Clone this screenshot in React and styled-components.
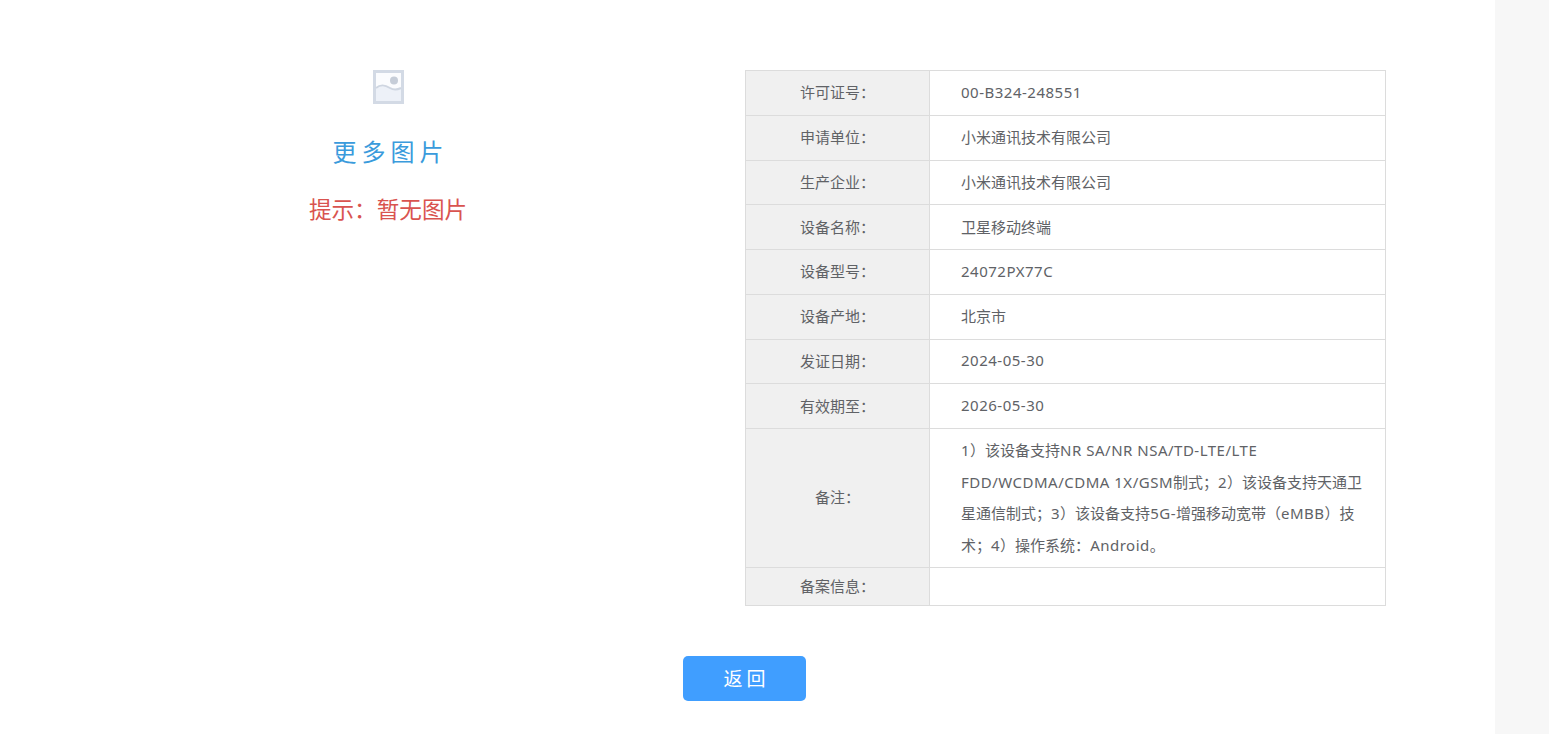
import React from "react";
import styled, { createGlobalStyle } from "styled-components";

const GlobalStyle = createGlobalStyle`
  html, body {
    margin: 0;
    padding: 0;
    background: #fff;
    font-family: "Noto Sans", "Noto Sans CJK SC", sans-serif;
  }
`;

const COLON = "\uFF1A";
const SEMI = "\uFF1B";
const L = "\uFF08";
const R = "\uFF09";

const rows = [
  ["许可证号" + COLON, "00-B324-248551"],
  ["申请单位" + COLON, "小米通讯技术有限公司"],
  ["生产企业" + COLON, "小米通讯技术有限公司"],
  ["设备名称" + COLON, "卫星移动终端"],
  ["设备型号" + COLON, "24072PX77C"],
  ["设备产地" + COLON, "北京市"],
  ["发证日期" + COLON, "2024-05-30"],
  ["有效期至" + COLON, "2026-05-30"],
];

const note =
  `1${R}该设备支持NR SA/NR NSA/TD-LTE/LTE FDD/WCDMA/CDMA 1X/GSM制式${SEMI}` +
  `2${R}该设备支持天通卫星通信制式${SEMI}3${R}该设备支持5G-增强移动宽带${L}eMBB${R}技术${SEMI}` +
  `4${R}操作系统${COLON}Android。`;

// latin runs are set a bit wider than the CJK around them
const withLatin = (text) =>
  text.split(/([A-Za-z0-9 /-]+)/).map((part, i) =>
    i % 2 ? <Latin key={i}>{part}</Latin> : part
  );

const PlaceholderIcon = () => (
  <svg width="31" height="34" viewBox="0 0 31 34">
    <rect x="0" y="0" width="31" height="34" fill="#d3dae5" />
    <rect x="3" y="3" width="25" height="28" fill="#fbfcfe" />
    <path d="M3 18 C8 14 12 15 17 18 C21 20.5 24 20 28 18 V31 H3 Z" fill="#edf1f8" />
    <path d="M3 18 C8 14 12 15 17 18 C21 20.5 24 20 28 18" fill="none" stroke="#cfd6e1" strokeWidth="2" />
    <circle cx="21" cy="10.5" r="4" fill="#c6cdd8" />
  </svg>
);

const App = () => (
  <Page>
    <GlobalStyle />
    <Main>
      <Content>
        <Gallery>
          <PlaceholderIcon />
          <MoreLink>更多图片</MoreLink>
          <Hint>{"提示" + COLON + "暂无图片"}</Hint>
        </Gallery>
        <InfoTable>
          <colgroup>
            <col width="184" />
            <col />
          </colgroup>
          <tbody>
            {rows.map(([label, value]) => (
              <Row key={label}>
                <Label>{label}</Label>
                <Value>{withLatin(value)}</Value>
              </Row>
            ))}
            <tr>
              <NoteLabel>{"备注" + COLON}</NoteLabel>
              <NoteValue>{withLatin(note)}</NoteValue>
            </tr>
            <ShortRow>
              <Label>{"备案信息" + COLON}</Label>
              <Value />
            </ShortRow>
          </tbody>
        </InfoTable>
      </Content>
      <Actions>
        <BackButton>返回</BackButton>
      </Actions>
    </Main>
    <Rail />
  </Page>
);

const Page = styled.div`
  display: flex;
  height: 734px;
  overflow: hidden;
`;

const Main = styled.div`
  flex: 1;
  padding-top: 70px;
`;

const Rail = styled.div`
  width: 54px;
  background: #f7f7f7;
`;

const Content = styled.div`
  display: flex;
  align-items: flex-start;
  padding-left: 31px;
`;

const Gallery = styled.div`
  width: 714px;
  display: flex;
  flex-direction: column;
  align-items: center;
`;

const MoreLink = styled.div`
  margin-top: 30px;
  font-size: 24px;
  line-height: 36px;
  letter-spacing: 5px;
  margin-right: -5px;
  color: #3a9bdc;
`;

const Hint = styled.div`
  margin-top: 22px;
  font-size: 22.6px;
  line-height: 36px;
  color: #d9534f;
`;

const InfoTable = styled.table`
  width: 641px;
  table-layout: fixed;
  border-collapse: collapse;
  font-size: 15px;
  color: #606266;
`;

const Row = styled.tr`
  height: 44.75px;
`;

const ShortRow = styled.tr`
  height: 38px;
`;

const Label = styled.td`
  border: 1px solid #dcdcdc;
  background: #f0f0f0;
  text-align: center;
  padding: 0 0 2px;
`;

const NoteLabel = styled(Label)`
  padding-bottom: 4px;
`;

const Value = styled.td`
  border: 1px solid #dcdcdc;
  padding: 0 18px 2px 31px;
`;

const NoteValue = styled(Value)`
  line-height: 31.5px;
  padding-top: 6px;
  padding-bottom: 6px;
`;

const Latin = styled.span`
  letter-spacing: 0.5px;
`;

const Actions = styled.div`
  display: flex;
  justify-content: flex-start;
  padding: 50px 0 0 683px;
`;

const BackButton = styled.button`
  width: 123px;
  height: 45px;
  border: none;
  border-radius: 5px;
  background: #409eff;
  color: #fff;
  font-family: inherit;
  font-size: 19px;
  letter-spacing: 4px;
  padding: 0 0 2px 4px;
`;

export default App;
